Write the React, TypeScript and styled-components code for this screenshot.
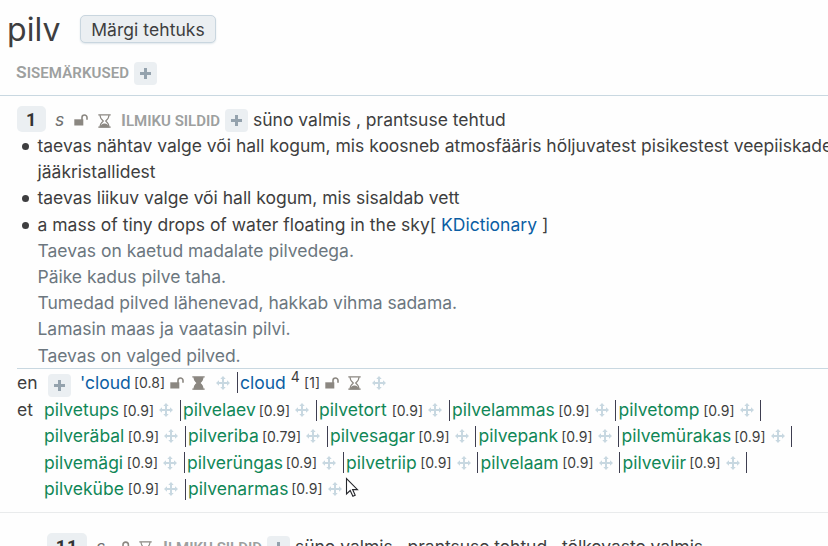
import React from 'react';
import styled, { createGlobalStyle } from 'styled-components';

const Global = createGlobalStyle`
  * { box-sizing: border-box; }
  body { margin: 0; background: #fefefe; overflow: hidden; }
`;

const Page = styled.main`
  position: relative;
  width: 828px;
  height: 546px;
  overflow: hidden;
  background: #fefefe;
  color: #3e3e40;
  font: 400 17.5px/26.25px Inter, Roboto, sans-serif;
  white-space: nowrap;
`;

const Header = styled.header`
  display: flex;
  align-items: flex-start;
  height: 61px;
  padding-left: 7px;
`;

const Title = styled.h1`
  width: 73px;
  margin: 0;
  padding-top: 10px;
  font-size: 32px;
  font-weight: 400;
  line-height: 40px;
  letter-spacing: 0.1px;
`;

const DoneButton = styled.button`
  width: 136px;
  height: 28px;
  margin-top: 15px;
  padding: 1px 0 0;
  border: 1px solid #c9d6df;
  border-radius: 5px;
  background: #ebeff2;
  box-shadow: 0 1px 2px #dfe6eb;
  color: #3e3e40;
  font: 400 17.5px/25px Inter, sans-serif;
  letter-spacing: 0.05px;
`;

const NotesRow = styled.section`
  display: flex;
  height: 35px;
  padding-left: 16px;
  border-bottom: 1px solid #c9d8e1;
`;

const SmallCaps = styled.span<{ $w: number; $ls?: number }>`
  display: block;
  width: ${p => p.$w}px;
  color: #9da09f;
  font: 600 15px/23px Roboto, sans-serif;
  letter-spacing: ${p => p.$ls ?? 0}px;
  &::first-letter { font-size: 17.4px; }
`;

const AddButton = styled.button`
  display: flex;
  align-items: center;
  justify-content: center;
  flex: none;
  width: 23px;
  height: 23px;
  margin-top: 1px;
  padding: 0;
  border: 0;
  border-radius: 4px;
  background: #ebeff2;
`;

const Meaning = styled.div<{ $x: number; $top: number }>`
  display: flex;
  align-items: flex-start;
  height: ${p => 26 + p.$top}px;
  padding: ${p => p.$top}px 0 0 ${p => p.$x}px;
`;

const NumberBadge = styled.b<{ $w: number }>`
  width: ${p => p.$w}px;
  height: 26px;
  border-radius: 5px;
  background: #ebeff2;
  color: #333;
  font: 700 18px/27px Roboto, sans-serif;
  letter-spacing: 0.8px;
  text-align: center;
`;

const State = styled.i<{ $w: number }>`
  width: ${p => p.$w}px;
  padding-left: 9px;
  color: #6f7070;
  font: italic 400 17.5px/28px Inter, sans-serif;
`;

const IconSlot = styled.span<{ $w: number; $top?: number }>`
  display: flex;
  flex: none;
  width: ${p => p.$w}px;
  padding-top: ${p => p.$top ?? 0}px;
`;

const TagCaps = styled.div`
  padding-top: 3px;
`;

const TagAdd = styled.div<{ $mr: number }>`
  padding-top: 2px;
  margin-right: ${p => p.$mr}px;
`;

const Run = styled.span<{ $ls: number }>`
  padding-top: 1px;
  letter-spacing: ${p => p.$ls}px;
`;

const Definitions = styled.ul`
  margin: 0;
  padding: 1px 0 0 37.5px;
  height: 236px;
  list-style: none;
`;

const Definition = styled.li<{ $ls: number }>`
  position: relative;
  height: 26.2px;
  letter-spacing: ${p => p.$ls}px;
`;

const Dot = styled.span`
  position: absolute;
  left: -15.5px;
  top: 10px;
  width: 7px;
  height: 7px;
  border-radius: 50%;
  background: #3e3e40;
`;

const Source = styled.a`
  color: #0b5ea4;
`;

const Example = styled(Definition)`
  color: #6c777f;
`;

const Relations = styled.section`
  height: 144px;
  margin-left: 17px;
  border-top: 1px solid #c9d8e1;
`;

const RelationRow = styled.div`
  display: flex;
  height: 27px;
  line-height: 28px;
`;

const Language = styled.span`
  width: 27px;
  flex: none;
`;

const WordRows = styled.div`
  padding-top: 1px;
  line-height: 26.3px;
`;

const WordRow = styled.div`
  display: flex;
  height: 26.3px;
`;

const Item = styled.div<{ $w: number }>`
  display: flex;
  align-items: center;
  flex: none;
  width: ${p => p.$w}px;
`;

const Word = styled.a<{ $blue?: boolean; $ls?: number }>`
  flex: 1;
  width: 0;
  color: ${p => (p.$blue ? '#0b5ea4' : '#108757')};
  letter-spacing: ${p => p.$ls ?? 0}px;
`;

const Score = styled.span`
  padding-top: 1px;
  font-size: 14px;
  margin-right: 5px;
`;

const Bar = styled.span`
  flex: none;
  width: 1px;
  height: 21px;
  margin: 0 2.5px 0 6.5px;
  background: #3e3e50;
`;

const Sup = styled.sup`
  position: relative;
  top: -7px;
  color: #3e3e40;
  font-size: 14px;
  line-height: 0;
  vertical-align: baseline;
`;

const Divider = styled.hr`
  height: 1px;
  margin: 0;
  border: 0;
  background: #e9ebec;
`;

const Pointer = styled.svg`
  position: absolute;
  left: 345px;
  top: 477px;
`;

const Plus = () => (
  <svg width="11" height="11" viewBox="0 0 11 11"><path d="M5.5 0v11M0 5.5h11" stroke="#94a2ad" strokeWidth="3" /></svg>
);

const Unlock = () => (
  <svg width="14" height="12" viewBox="0 0 14 12">
    <path d="M0.3 5.300H9.300v6.200H.3Z" fill="#8b8781" />
    <path d="M8 6V3.500a2.500 2.500 0 0 1 5 0V5.800" fill="none" stroke="#8b8781" strokeWidth="1.600" />
  </svg>
);

const Hourglass = ({ full = false }: { full?: boolean }) => (
  <svg width="13" height="14" viewBox="0 0 13 14">
    <path d="M.3.9h12.4M.3 13.1h12.4" stroke="#8b8781" strokeWidth="1.4" />
    <path d="M2 1c0 3.2 1.5 4.6 3.3 6C3.5 8.400 2 9.800 2 13h9c0-3.200-1.500-4.600-3.300-6C9.500 5.600 11 4.200 11 1" fill={full ? '#8b8781' : 'none'} stroke="#8b8781" strokeWidth="1.100" />
    <path d="M2.500 13c.2-2 1.500-3.500 4-3.500s3.800 1.500 4 3.500Z" fill="#8b8781" />
  </svg>
);

const Move = () => (
  <svg width="14" height="14" viewBox="0 0 14 14">
    <path d="M7 2v10M2 7h10" stroke="#c8d8e1" strokeWidth="2" />
    <path d="M7 0 9.700 3H4.300ZM7 14 4.300 11h5.400ZM0 7l3-2.700v5.400ZM14 7l-3 2.700V4.300Z" fill="#c8d8e1" />
  </svg>
);

type Entry = { word: string; score: string; width: number; last?: boolean };

const rows: Entry[][] = [
  [
    { word: 'pilvetups', score: '0.9', width: 139 },
    { word: 'pilvelaev', score: '0.9', width: 136 },
    { word: 'pilvetort', score: '0.9', width: 133 },
    { word: 'pilvelammas', score: '0.9', width: 166.5 },
    { word: 'pilvetomp', score: '0.9', width: 145 },
  ],
  [
    { word: 'pilveräbal', score: '0.9', width: 144 },
    { word: 'pilveriba', score: '0.79', width: 142 },
    { word: 'pilvesagar', score: '0.9', width: 148.5 },
    { word: 'pilvepank', score: '0.9', width: 143 },
    { word: 'pilvemürakas', score: '0.9', width: 173 },
  ],
  [
    { word: 'pilvemägi', score: '0.9', width: 143 },
    { word: 'pilverüngas', score: '0.9', width: 159 },
    { word: 'pilvetriip', score: '0.9', width: 134.5 },
    { word: 'pilvelaam', score: '0.9', width: 142 },
    { word: 'pilveviir', score: '0.9', width: 127 },
  ],
  [
    { word: 'pilvekübe', score: '0.9', width: 144 },
    { word: 'pilvenarmas', score: '0.9', width: 153.5, last: true },
  ],
];

export default function App() {
  return (
    <Page>
      <Global />
      <Header>
        <Title>pilv</Title>
        <DoneButton>Märgi tehtuks</DoneButton>
      </Header>
      <NotesRow>
        <SmallCaps $w={118} $ls={0.08}>SISEMÄRKUSED</SmallCaps>
        <AddButton><Plus /></AddButton>
      </NotesRow>

      <Meaning $x={17} $top={10}>
        <NumberBadge $w={29}>1</NumberBadge>
        <State $w={28}>s</State>
        <IconSlot $w={24} $top={8}><Unlock /></IconSlot>
        <IconSlot $w={23} $top={8}><Hourglass /></IconSlot>
        <TagCaps><SmallCaps $w={104}>ILMIKU SILDID</SmallCaps></TagCaps>
        <TagAdd $mr={5}><AddButton><Plus /></AddButton></TagAdd>
        <Run $ls={0}>süno valmis , prantsuse tehtud</Run>
      </Meaning>

      <Definitions>
        <Definition $ls={-0.01}><Dot />taevas nähtav valge või hall kogum, mis koosneb atmosfääris hõljuvatest pisikestest veepiiskadest või</Definition>
        <Definition $ls={0}>jääkristallidest</Definition>
        <Definition $ls={-0.01}><Dot />taevas liikuv valge või hall kogum, mis sisaldab vett</Definition>
        <Definition $ls={0}><Dot />a mass of tiny drops of water floating in the sky[ <Source>KDictionary</Source> ]</Definition>
        <Example $ls={0}>Taevas on kaetud madalate pilvedega.</Example>
        <Example $ls={-0.02}>Päike kadus pilve taha.</Example>
        <Example $ls={-0.03}>Tumedad pilved lähenevad, hakkab vihma sadama.</Example>
        <Example $ls={-0.03}>Lamasin maas ja vaatasin pilvi.</Example>
        <Example $ls={-0.05}>Taevas on valged pilved.</Example>
      </Definitions>

      <Relations>
        <RelationRow>
          <IconSlot $w={31}>en</IconSlot>
          <IconSlot $w={32} $top={4}><AddButton><Plus /></AddButton></IconSlot>
          <Item $w={160}>
            <Word $blue>'cloud</Word>
            <Score>[0.8]</Score>
            <IconSlot $w={22}><Unlock /></IconSlot>
            <IconSlot $w={24}><Hourglass full /></IconSlot>
            <Move />
            <Bar />
          </Item>
          <Item $w={146}>
            <Word $blue>cloud <Sup>4</Sup></Word>
            <Score>[1]</Score>
            <IconSlot $w={23}><Unlock /></IconSlot>
            <IconSlot $w={24}><Hourglass /></IconSlot>
            <Move />
          </Item>
        </RelationRow>
        <RelationRow>
          <Language>et</Language>
          <WordRows>
            {rows.map((row, i) => (
              <WordRow key={i}>
                {row.map(e => (
                  <Item key={e.word} $w={e.width}>
                    <Word>{e.word}</Word>
                    <Score>[{e.score}]</Score>
                    <Move />
                    {!e.last && <Bar />}
                  </Item>
                ))}
              </WordRow>
            ))}
          </WordRows>
        </RelationRow>
      </Relations>
      <Divider />

      <Meaning $x={47} $top={20}>
        <NumberBadge $w={40}>11</NumberBadge>
        <State $w={34}>s</State>
        <IconSlot $w={18} $top={8}>
          <svg width="10" height="14" viewBox="0 0 10 14">
            <path d="M2 7V3.800a2.700 2.700 0 0 1 5.400 0V7" fill="none" stroke="#8b8781" strokeWidth="1.600" />
            <path d="M0 6h9.400v6H0Z" fill="#8b8781" />
          </svg>
        </IconSlot>
        <IconSlot $w={24} $top={8}><Hourglass /></IconSlot>
        <TagCaps><SmallCaps $w={104}>ILMIKU SILDID</SmallCaps></TagCaps>
        <TagAdd $mr={5}><AddButton><Plus /></AddButton></TagAdd>
        <Run $ls={-0.02}>süno valmis , prantsuse tehtud , tõlkevaste valmis</Run>
      </Meaning>

      <Pointer width="14" height="21" viewBox="0 0 14 21">
        <path d="M1.500 1.500v15.500l3.700-3.500 2.700 5.800 2.300-1-2.600-5.700h4.900Z" fill="#fff" stroke="#26272c" strokeWidth="1.100" />
      </Pointer>
    </Page>
  );
}
